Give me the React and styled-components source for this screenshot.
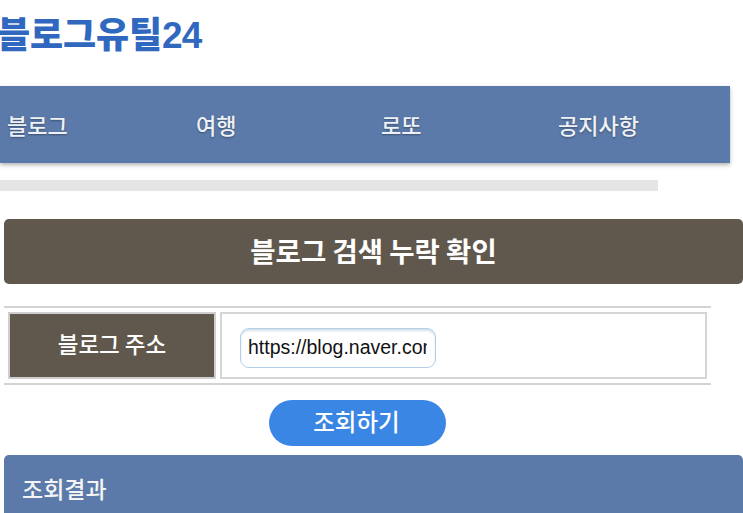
import React from "react";
import styled, { createGlobalStyle } from "styled-components";

const Global = createGlobalStyle`
  html, body { margin: 0; padding: 0; background: #fff; height: 513px; overflow: hidden; }
  body { font-family: "Noto Sans CJK KR", "Liberation Sans", sans-serif; }
`;
const Page = styled.div`
  width: 743px; height: 513px; overflow: hidden; display: flex; flex-direction: column;
`;
const Logo = styled.h1`
  flex: none; margin: 0 0 0 -3px; height: 86px; padding-top: 8px; box-sizing: border-box;
  font-size: 36px; line-height: 48px; font-weight: 900; letter-spacing: -0.1px;
  color: #3068c0; white-space: nowrap;
`;
const LogoNum = styled.span`
  font-family: "Liberation Sans", sans-serif; letter-spacing: -1px; font-size: 37px;
`;
const Nav = styled.nav`
  width: 730px; height: 77px; flex: none; background: #5b7aa9; display: grid;
  grid-template-columns: 7px 189px 185px 177px auto; align-items: center;
  box-shadow: 0 2px 4px rgba(0,0,0,.3);
`;
const NavItem = styled.a`
  grid-column: ${p => p.$col}; font-size: 22px; line-height: 30px; color: #eef1f5; font-weight: 500;
  text-shadow: 0 1px 2px rgba(0,0,0,.35); white-space: nowrap;
  margin-top: -2px;
`;
const Track = styled.div`
  width: 658px; height: 11px; flex: none; margin-top: 17px; background: #e5e5e5;
`;
const Content = styled.main`
  flex: none; margin: 28px 0 0 4px; display: flex; flex-direction: column; align-items: flex-start;
`;
const Title = styled.h2`
  margin: 0; width: 739px; height: 65px; background: #61584d; border-radius: 5px;
  color: #fff; font-size: 27.5px; font-weight: 700; line-height: 63px; text-align: center; white-space: nowrap;
`;
const FormTable = styled.div`
  margin-top: 22px; width: 707px; box-sizing: border-box; height: 79px; padding: 4px;
  border-top: 2px solid #d3d3d6; border-bottom: 2px solid #d3d3d6;
  display: grid; grid-template-columns: 208px 487px; column-gap: 4px;
`;
const Th = styled.div`
  background: #61584d; border: 2px solid #cfcfcf; box-sizing: border-box;
  color: #fff; font-size: 22.5px; font-weight: 500; display: flex; align-items: center; justify-content: center;
  padding-bottom: 5px;
`;
const Td = styled.div`
  border: 2px solid #d5d5d5; box-sizing: border-box; display: flex; align-items: center; padding: 4px 0 0 18px;
`;
const Input = styled.input`
  width: 196px; height: 40px; box-sizing: border-box; border: 1.5px solid #b5cfe8; border-radius: 9px;
  padding: 0 8px 0 7px; font-family: "Liberation Sans", sans-serif; font-size: 19.5px; color: #111; background: #fff;
  box-shadow: inset 0 2px 2px rgba(120,150,190,.3); outline: none;
`;
const Search = styled.button`
  margin: 15px 0 0 265px; width: 177px; height: 46px; border: 0; border-radius: 23px; background: #3a86e4;
  color: #fff; font-family: inherit; font-size: 23.5px; font-weight: 500; padding: 0 2px 5px 0;
`;
const Result = styled.section`
  margin-top: 9px; width: 739px; height: 70px; border-radius: 5px 5px 0 0; background: #5b7aa9; box-sizing: border-box;
  padding: 13px 0 0 18px; color: #f4f4f4; font-size: 23px; font-weight: 500; line-height: 40px;
`;

export default function App() {
  return (
    <Page>
      <Global />
      <Logo>블로그유틸<LogoNum>24</LogoNum></Logo>
      <Nav>
        <NavItem $col={2}>블로그</NavItem>
        <NavItem $col={3}>여행</NavItem>
        <NavItem $col={4}>로또</NavItem>
        <NavItem $col={5}>공지사항</NavItem>
      </Nav>
      <Track />
      <Content>
        <Title>블로그 검색 누락 확인</Title>
        <FormTable>
          <Th>블로그 주소</Th>
          <Td><Input readOnly value="https://blog.naver.com/" /></Td>
        </FormTable>
        <Search>조회하기</Search>
        <Result>조회결과</Result>
      </Content>
    </Page>
  );
}
